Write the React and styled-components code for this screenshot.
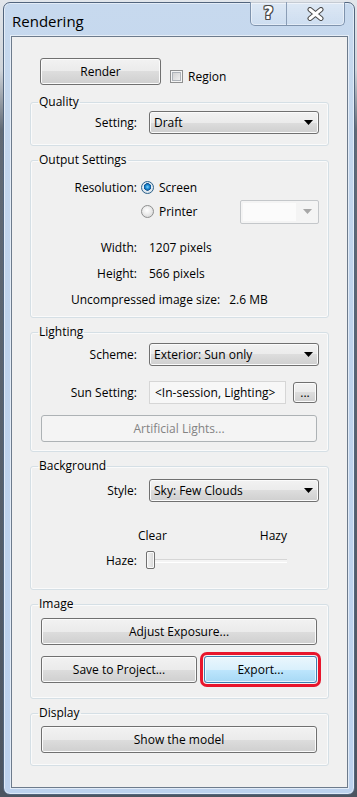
import styled, { createGlobalStyle } from "styled-components";

const GlobalStyle = createGlobalStyle`
  html, body {
    margin: 0;
    padding: 0;
  }
  body {
    width: 357px;
    height: 797px;
    overflow: hidden;
    background: linear-gradient(180deg, #e2e6eb 0px, #cfd4da 70px, #616a75 130px, #4c5561 100%);
    font-family: "Open Sans", "Noto Sans", sans-serif;
    font-size: 12px;
    color: #000;
  }
`;

const Screen = styled.div`
  padding: 2px 2px 0 3px;
`;

const Window = styled.div`
  width: 352px;
  height: 793px;
  box-sizing: border-box;
  border: 1px solid #52657d;
  border-radius: 7px;
  background: linear-gradient(180deg, #c7d9ee 0%, #bfd3ec 40%, #bdd2ee 100%);
  box-shadow: inset 0 0 0 1px rgba(255, 255, 255, 0.5);
  display: flex;
  flex-direction: column;
  padding: 0 6px 6px 7px;
`;

const TitleBar = styled.div`
  height: 33px;
  display: flex;
  justify-content: space-between;
  align-items: flex-start;
`;

const Title = styled.div`
  font-size: 15px;
  padding: 8px 0 0 1px;
  color: #000;
`;

const CaptionGroup = styled.div`
  display: flex;
  margin-right: 3px;
  margin-top: -1px;
  border: 1px solid #7f93ad;
  border-top: none;
  border-radius: 0 0 5px 5px;
  box-shadow: inset 0 0 0 1px rgba(255, 255, 255, 0.45);
  overflow: hidden;
`;

const CaptionButton = styled.div`
  width: ${(p) => p.$w}px;
  height: 23px;
  display: flex;
  align-items: center;
  justify-content: center;
  background: linear-gradient(180deg, rgba(255, 255, 255, 0.4), rgba(255, 255, 255, 0.12));
  & + & {
    border-left: 1px solid #8a9db6;
  }
`;

const HelpGlyph = styled.span`
  font-family: "DejaVu Sans", sans-serif;
  font-weight: bold;
  font-size: 17px;
  line-height: 1;
  color: #fff;
  text-shadow: 1px 0 #4b4b4b, -1px 0 #4b4b4b, 0 1px #4b4b4b, 0 -1px #4b4b4b,
    1px 1px #4b4b4b, -1px -1px #4b4b4b, 1px -1px #4b4b4b, -1px 1px #4b4b4b;
`;

const Client = styled.div`
  flex: 1;
  background: #f0f0f0;
  border: 1px solid #6d7b8c;
  box-shadow: 0 0 0 1px rgba(255, 255, 255, 0.55);
  padding: 21px 18px 0 18px;
  display: flex;
  flex-direction: column;
  gap: 7px;
`;

const TopRow = styled.div`
  display: flex;
  align-items: flex-start;
  margin-left: 10px;
  margin-bottom: 3px;
`;

const Button = styled.button`
  width: ${(p) => (p.$w ? `${p.$w}px` : "calc(100% - 2px)")};
  height: ${(p) => p.$h || 27}px;
  box-sizing: border-box;
  padding: 0;
  font-family: inherit;
  font-size: 12px;
  color: #000;
  border: 1px solid #707070;
  border-radius: 3px;
  background: linear-gradient(180deg, #f2f2f2 0%, #ebebeb 50%, #dddddd 50%, #cfcfcf 100%);
  box-shadow: inset 0 0 0 1px #fbfbfb;
  flex-shrink: 0;
`;

const DisabledButton = styled(Button)`
  border-color: #adb2b5;
  background: #f4f4f4;
  box-shadow: none;
  color: #838383;
`;

const HotButton = styled(Button)`
  border-color: #3c7fb1;
  background: linear-gradient(180deg, #eaf6fd 0%, #d9f0fc 50%, #bee6fd 50%, #a7d9f5 100%);
  box-shadow: inset 0 0 0 1px rgba(255, 255, 255, 0.7), 0 0 0 1px #f3f3f3, 0 0 0 4px #e8152c;
`;

const CheckLabel = styled.label`
  display: flex;
  align-items: center;
  margin: 10px 0 0 9px;
  gap: 5px;
`;

const CheckBox = styled.span`
  width: 13px;
  height: 13px;
  box-sizing: border-box;
  border: 1px solid #8e8f8f;
  background: linear-gradient(135deg, #cbcbcb, #f6f6f6);
  box-shadow: inset 0 0 0 1px #f4f4f4, inset 0 0 0 2px #aeb3b9;
`;

const Group = styled.fieldset`
  margin: 0;
  padding: ${(p) => p.$pt || 0}px 9px ${(p) => p.$pb || 0}px 10px;
  border: 1px solid #d5dfe5;
  border-radius: 3px;
  box-shadow: inset 0 0 0 1px #fafafa;
  min-width: 0;
`;

const Legend = styled.legend`
  padding: 0 1px;
  margin-left: -3px;
  line-height: 14px;
  font-size: 12px;
`;

const Row = styled.div`
  display: flex;
  align-items: center;
  height: ${(p) => p.$h || 23}px;
  margin-top: ${(p) => p.$mt || 0}px;
  padding-left: ${(p) => p.$pl || 0}px;
`;

const Label = styled.span`
  width: 96px;
  flex-shrink: 0;
  text-align: right;
  margin-right: ${(p) => (p.$gap === undefined ? 12 : p.$gap)}px;
`;

const Combo = styled.div`
  width: ${(p) => p.$w || 170}px;
  height: ${(p) => p.$h || 23}px;
  box-sizing: border-box;
  border: 1px solid #707070;
  border-radius: 3px;
  background: linear-gradient(180deg, #f2f2f2 0%, #ebebeb 50%, #dddddd 50%, #cfcfcf 100%);
  box-shadow: inset 0 0 0 1px #fbfbfb;
  display: flex;
  align-items: center;
  justify-content: space-between;
  padding: 0 5px 0 4px;
`;

const DisabledCombo = styled.div`
  width: 79px;
  height: 24px;
  margin-left: auto;
  margin-right: 0;
  box-sizing: border-box;
  border: 1px solid #c4c7ca;
  border-radius: 2px;
  background: #f4f4f4;
  display: flex;
  align-items: stretch;
`;

const DisabledField = styled.div`
  flex: 1;
  margin: 2px 0 2px 2px;
  background: #fbfbfb;
`;

const DisabledArrow = styled.div`
  width: 22px;
  display: flex;
  align-items: center;
  justify-content: center;
`;

const Radio = styled.span`
  width: 13px;
  height: 13px;
  box-sizing: border-box;
  border-radius: 50%;
  border: 1px solid ${(p) => (p.$on ? "#2c628b" : "#8e8f8f")};
  background: ${(p) =>
    p.$on
      ? "radial-gradient(circle at 50% 45%, #7fd2f7 0, #1c8ad3 2px, #0c4f8f 3.5px, #e4ecf2 4px, #c9d3dc 100%)"
      : "radial-gradient(circle at 45% 40%, #ffffff 0, #eeeeee 40%, #cfcfcf 100%)"};
  margin-right: 5px;
  flex-shrink: 0;
`;

const Field = styled.div`
  width: 137px;
  height: 23px;
  box-sizing: border-box;
  border: 1px solid #d6d6d6;
  background: #f7f7f7;
  display: flex;
  align-items: center;
  padding-left: 5px;
  margin-right: 7px;
  white-space: nowrap;
`;

const ScaleLabels = styled.div`
  display: flex;
  justify-content: space-between;
  width: 149px;
  height: 16px;
  line-height: 16px;
  margin: 26px 0 0 97px;
`;

const Slider = styled.div`
  position: relative;
  width: 141px;
  height: 20px;
  margin-left: 1px;
`;

const Track = styled.div`
  position: absolute;
  left: 4px;
  right: 0;
  top: 9px;
  height: 2px;
  background: #f4f4f4;
  border-top: 1px solid #d6d6d6;
  border-bottom: 1px solid #fff;
`;

const Thumb = styled.div`
  position: absolute;
  left: 0;
  top: 1px;
  width: 9px;
  height: 18px;
  box-sizing: border-box;
  border: 1px solid #707070;
  border-radius: 2px;
  background: linear-gradient(90deg, #f2f2f2 0%, #e6e6e6 50%, #d4d4d4 100%);
  box-shadow: inset 0 0 0 1px #fafafa;
`;

const ButtonRow = styled.div`
  display: flex;
  gap: 7px;
  margin-top: ${(p) => p.$mt || 0}px;
`;

function Arrow({ color = "#000" }) {
  return (
    <svg width="9" height="5" viewBox="0 0 9 5">
      <polygon points="0,0 9,0 4.5,5" fill={color} />
    </svg>
  );
}

function CloseGlyph() {
  return (
    <svg width="17" height="14" viewBox="0 0 17 14">
      <path d="M3 2.5 L14 11.5 M14 2.5 L3 11.5" stroke="#4b4b4b" strokeWidth="5" strokeLinecap="round" />
      <path d="M3 2.5 L14 11.5 M14 2.5 L3 11.5" stroke="#fff" strokeWidth="3" strokeLinecap="round" />
    </svg>
  );
}

export default function App() {
  return (
    <>
      <GlobalStyle />
      <Screen>
        <Window>
          <TitleBar>
            <Title>Rendering</Title>
            <CaptionGroup>
              <CaptionButton $w={35}>
                <HelpGlyph>?</HelpGlyph>
              </CaptionButton>
              <CaptionButton $w={57}>
                <CloseGlyph />
              </CaptionButton>
            </CaptionGroup>
          </TitleBar>
          <Client>
            <TopRow>
              <Button $w={121}>Render</Button>
              <CheckLabel>
                <CheckBox />
                Region
              </CheckLabel>
            </TopRow>

            <Group $pt={2} $pb={11}>
              <Legend>Quality</Legend>
              <Row>
                <Label>Setting:</Label>
                <Combo>
                  Draft
                  <Arrow />
                </Combo>
              </Row>
            </Group>

            <Group $pt={10} $pb={5}>
              <Legend>Output Settings</Legend>
              <Row $h={20}>
                <Label $gap={4}>Resolution:</Label>
                <Radio $on />
                Screen
              </Row>
              <Row $h={25} $mt={2} $pl={100}>
                <Radio />
                Printer
                <DisabledCombo>
                  <DisabledField />
                  <DisabledArrow>
                    <Arrow color="#a7a7a7" />
                  </DisabledArrow>
                </DisabledCombo>
              </Row>
              <Row $h={26} $mt={10}>
                <Label>Width:</Label>
                1207 pixels
              </Row>
              <Row $h={26}>
                <Label>Height:</Label>
                566 pixels
              </Row>
              <Row $h={26} $pl={30}>
                <span>Uncompressed image size:</span>
                <span style={{ marginLeft: 9 }}>2.6 MB</span>
              </Row>
            </Group>

            <Group $pt={4} $pb={9}>
              <Legend>Lighting</Legend>
              <Row>
                <Label>Scheme:</Label>
                <Combo>
                  Exterior: Sun only
                  <Arrow />
                </Combo>
              </Row>
              <Row $mt={15}>
                <Label>Sun Setting:</Label>
                <Field>&lt;In-session, Lighting&gt;</Field>
                <Button $w={24} $h={21}>
                  ...
                </Button>
              </Row>
              <ButtonRow $mt={11}>
                <DisabledButton>Artificial Lights...</DisabledButton>
              </ButtonRow>
            </Group>

            <Group $pt={6} $pb={19}>
              <Legend>Background</Legend>
              <Row>
                <Label>Style:</Label>
                <Combo>
                  Sky: Few Clouds
                  <Arrow />
                </Combo>
              </Row>
              <ScaleLabels>
                <span>Clear</span>
                <span>Hazy</span>
              </ScaleLabels>
              <Row $h={20} $mt={6}>
                <Label $gap={8}>Haze:</Label>
                <Slider>
                  <Track />
                  <Thumb />
                </Slider>
              </Row>
            </Group>

            <Group $pt={7} $pb={15}>
              <Legend>Image</Legend>
              <ButtonRow>
                <Button>Adjust Exposure...</Button>
              </ButtonRow>
              <ButtonRow $mt={11}>
                <Button $w={156}>Save to Project...</Button>
                <HotButton $w={113}>Export...</HotButton>
              </ButtonRow>
            </Group>

            <Group $pt={6} $pb={12}>
              <Legend>Display</Legend>
              <ButtonRow>
                <Button>Show the model</Button>
              </ButtonRow>
            </Group>
          </Client>
        </Window>
      </Screen>
    </>
  );
}
